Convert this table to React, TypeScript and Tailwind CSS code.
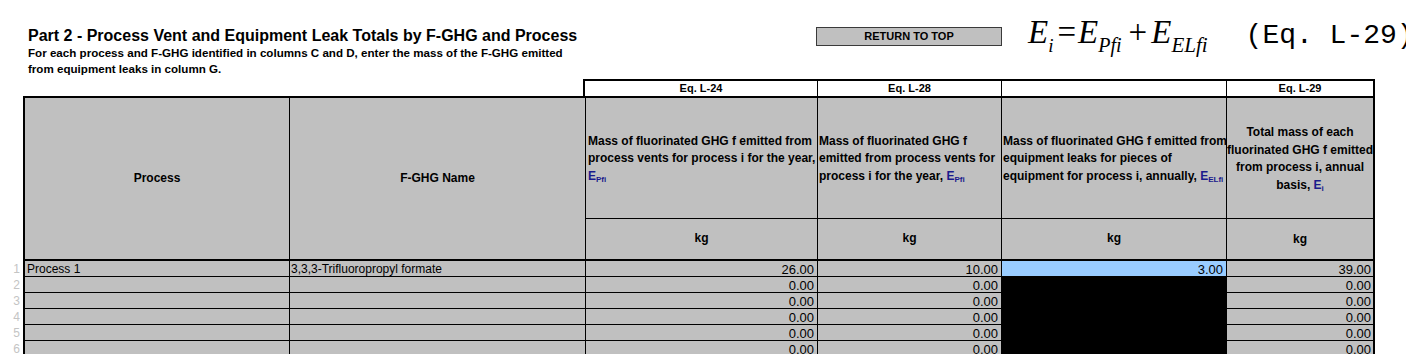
import React from "react";

const NARROW = "font-['Liberation_Sans_Narrow','Arial_Narrow','Liberation_Sans',sans-serif]";
const ARIAL = "font-['Liberation_Sans',Arial,sans-serif]";

const COLS = ["w-[265px]", "w-[296px]", "w-[232px]", "w-[184px]", "w-[225px]", "w-[146px]"];

type Row = { n: number; process: string; name: string; vent: string; vent2: string; leak: string | null; total: string };

const ROWS: Row[] = [
  { n: 1, process: "Process 1", name: "3,3,3-Trifluoropropyl formate", vent: "26.00", vent2: "10.00", leak: "3.00", total: "39.00" },
  { n: 2, process: "", name: "", vent: "0.00", vent2: "0.00", leak: null, total: "0.00" },
  { n: 3, process: "", name: "", vent: "0.00", vent2: "0.00", leak: null, total: "0.00" },
  { n: 4, process: "", name: "", vent: "0.00", vent2: "0.00", leak: null, total: "0.00" },
  { n: 5, process: "", name: "", vent: "0.00", vent2: "0.00", leak: null, total: "0.00" },
  { n: 6, process: "", name: "", vent: "0.00", vent2: "0.00", leak: null, total: "0.00" },
];

function Sym({ sub }: { sub: string }) {
  return (
    <span className="text-[#1a1a8c]">
      E<span className="relative top-[2px] text-[8px]">{sub}</span>
    </span>
  );
}

function Equation() {
  return (
    <div className="flex items-baseline ml-[26px] mt-[12px] h-[50px] whitespace-nowrap text-black">
      <div className="font-['Liberation_Serif','Times_New_Roman',serif] italic text-[33px] leading-[40px] flex items-baseline">
        <span>E</span>
        <span className="text-[19px] relative top-[9px] mr-[4px]">i</span>
        <span className="not-italic mr-[2px]">=</span>
        <span>E</span>
        <span className="text-[20px] relative top-[9px] mr-[7px]">Pfi</span>
        <span className="not-italic mr-[4px]">+</span>
        <span>E</span>
        <span className="text-[21px] relative top-[9px]">ELfi</span>
      </div>
      <div className="ml-[38px] font-['Liberation_Mono','Courier_New',monospace] text-[28px] leading-[40px]">(Eq. L-29)</div>
    </div>
  );
}

export default function App() {
  return (
    <div className="w-[1406px] h-[354px] overflow-hidden bg-white text-black">
      {/* heading strip */}
      <div className="flex h-[79px]">
        <div className="w-[816px] shrink-0 pl-[28px] pt-[27px]">
          <div className={`${ARIAL} font-bold text-[16px] leading-[18px] whitespace-nowrap`}>
            Part 2 - Process Vent and Equipment Leak Totals by F-GHG and Process
          </div>
          <div className={`${NARROW} font-bold text-[11.6px] leading-[16px]`}>
            For each process and F-GHG identified in columns C and D, enter the mass of the F-GHG emitted
            <br />
            from equipment leaks in column G.
          </div>
        </div>
        <div className="shrink-0 mt-[27px] w-[186px] h-[19px] bg-[#c0c0c0] border border-[#3a3a3a] flex items-center justify-center">
          <span className={`${NARROW} font-bold text-[11px]`}>RETURN TO TOP</span>
        </div>
        <Equation />
      </div>

      {/* equation labels row */}
      <div className={`${NARROW} font-bold text-[11px] ml-[583px] w-[792px] h-[17px] flex border-2 border-b-0 border-black`}>
        <div className="w-[233px] border-r border-black flex items-center justify-center">Eq. L-24</div>
        <div className="w-[184px] border-r border-black flex items-center justify-center">Eq. L-28</div>
        <div className="w-[225px] border-r border-black" />
        <div className="w-[146px] flex items-center justify-center">Eq. L-29</div>
      </div>

      {/* header block */}
      <div className={`${NARROW} font-bold text-[12px] leading-[17.5px] ml-[23px] w-[1352px] h-[165px] flex border-2 border-black bg-[#c0c0c0] whitespace-nowrap`}>
        <div className={`${COLS[0]} border-r border-black flex items-center justify-center`}>Process</div>
        <div className={`${COLS[1]} border-r border-black flex items-center justify-center`}>F-GHG Name</div>
        <div className={`${COLS[2]} border-r border-black flex flex-col`}>
          <div className="h-[121px] border-b border-black flex items-center pl-[2px] pt-[3px]">
            <div>
              Mass of fluorinated GHG f emitted from
              <br />
              process vents for process i for the year,
              <br />
              <Sym sub="Pfi" />
            </div>
          </div>
          <div className="flex-1 flex items-center justify-center">kg</div>
        </div>
        <div className={`${COLS[3]} border-r border-black flex flex-col`}>
          <div className="h-[121px] border-b border-black flex items-center pl-[1px] pt-[3px]">
            <div>
              Mass of fluorinated GHG f
              <br />
              emitted from process vents for
              <br />
              process i for the year, <Sym sub="Pfi" />
            </div>
          </div>
          <div className="flex-1 flex items-center justify-center">kg</div>
        </div>
        <div className={`${COLS[4]} border-r border-black flex flex-col`}>
          <div className="h-[121px] border-b border-black flex items-center pl-[1px] pt-[3px]">
            <div>
              Mass of fluorinated GHG f emitted from
              <br />
              equipment leaks for pieces of
              <br />
              equipment for process i, annually, <Sym sub="ELfi" />
            </div>
          </div>
          <div className="flex-1 flex items-center justify-center">kg</div>
        </div>
        <div className={`${COLS[5]} flex flex-col`}>
          <div className="h-[121px] border-b border-black flex items-center justify-center text-center pt-[3px]">
            <div>
              Total mass of each
              <br />
              fluorinated GHG f emitted
              <br />
              from process i, annual
              <br />
              basis, <Sym sub="i" />
            </div>
          </div>
          <div className="flex-1 flex items-center justify-center pt-[2px]">kg</div>
        </div>
      </div>

      {/* data rows */}
      {ROWS.map((r) => (
        <div key={r.n} className="flex h-[16px]">
          <div className={`${ARIAL} w-[23px] shrink-0 text-[12px] leading-[16px] text-[#c4c4c4] text-right pr-[3px]`}>{r.n}</div>
          <div className="flex w-[1352px] border-x-2 border-black bg-[#c0c0c0]">
            <div className={`${COLS[0]} ${ARIAL} text-[12px] leading-[15px] pt-[1px] border-r border-b border-black pl-[2px]`}>{r.process}</div>
            <div className={`${COLS[1]} ${ARIAL} text-[12px] leading-[15px] pt-[1px] border-r border-b border-black pl-[1px]`}>{r.name}</div>
            <div className={`${COLS[2]} ${NARROW} text-[13px] leading-[15px] pt-[1px] border-r border-b border-black text-right pr-[3px]`}>{r.vent}</div>
            <div className={`${COLS[3]} ${NARROW} text-[13px] leading-[15px] pt-[1px] border-r border-b border-black text-right pr-[3px]`}>{r.vent2}</div>
            {r.leak !== null ? (
              <div className={`${COLS[4]} ${NARROW} text-[13px] leading-[15px] pt-[1px] bg-[#99ccff] border-r border-b border-black text-right pr-[3px]`}>{r.leak}</div>
            ) : (
              <div className={`${COLS[4]} bg-black border-r border-black`} />
            )}
            <div className={`${COLS[5]} ${NARROW} text-[13px] leading-[15px] pt-[1px] border-b border-black text-right pr-[2px]`}>{r.total}</div>
          </div>
        </div>
      ))}
    </div>
  );
}
